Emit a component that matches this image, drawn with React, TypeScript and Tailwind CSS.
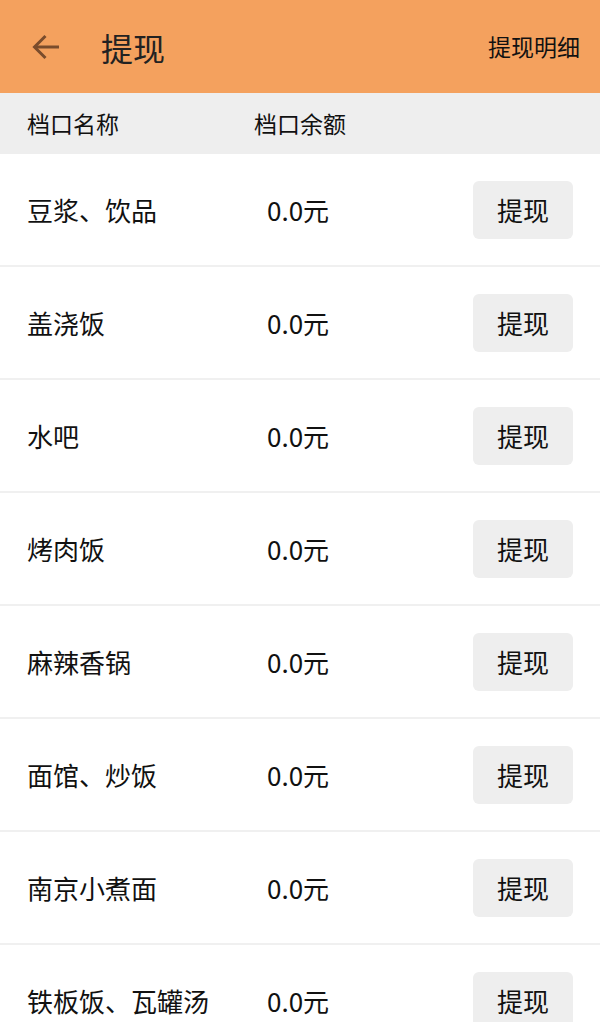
const stalls = [
  "豆浆、饮品",
  "盖浇饭",
  "水吧",
  "烤肉饭",
  "麻辣香锅",
  "面馆、炒饭",
  "南京小煮面",
  "铁板饭、瓦罐汤",
];

function BackArrow() {
  return (
    <svg width="30" height="28" viewBox="0 0 30 28" fill="none" className="text-[#7a4c2c]">
      <path d="M28 14H4" stroke="currentColor" strokeWidth="3" />
      <path d="M14.5 3 3.5 14l11 11" stroke="currentColor" strokeWidth="3" />
    </svg>
  );
}

export default function App() {
  return (
    <div
      className="min-h-screen bg-white text-[#111]"
      style={{ fontFamily: '"Noto Sans CJK SC", "Noto Sans", sans-serif' }}
    >
      {/* Header */}
      <div className="h-[93px] bg-[#f4a15e] flex items-center pl-[31px] pr-[20px]">
        <BackArrow />
        <h1 className="ml-[40px] text-[32px] font-normal text-[#222]">提现</h1>
        <span className="ml-auto text-[23px] text-[#111]">提现明细</span>
      </div>

      {/* Column headings */}
      <div className="h-[61px] bg-[#eeeeee] flex items-center pl-[27px] text-[23px] text-[#111]">
        <span className="w-[227px]">档口名称</span>
        <span>档口余额</span>
      </div>

      {/* Rows */}
      {stalls.map((name) => (
        <div
          key={name}
          className="h-[113px] flex items-center pl-[27px] pr-[27px] border-b-2 border-[#f0f0f0]"
        >
          <span className="w-[240px] text-[26px]">{name}</span>
          <span className="text-[26px]">0.0元</span>
          <button className="ml-auto w-[100px] h-[58px] rounded-[6px] bg-[#eeeeee] text-[26px] text-[#111]">
            提现
          </button>
        </div>
      ))}
    </div>
  );
}
